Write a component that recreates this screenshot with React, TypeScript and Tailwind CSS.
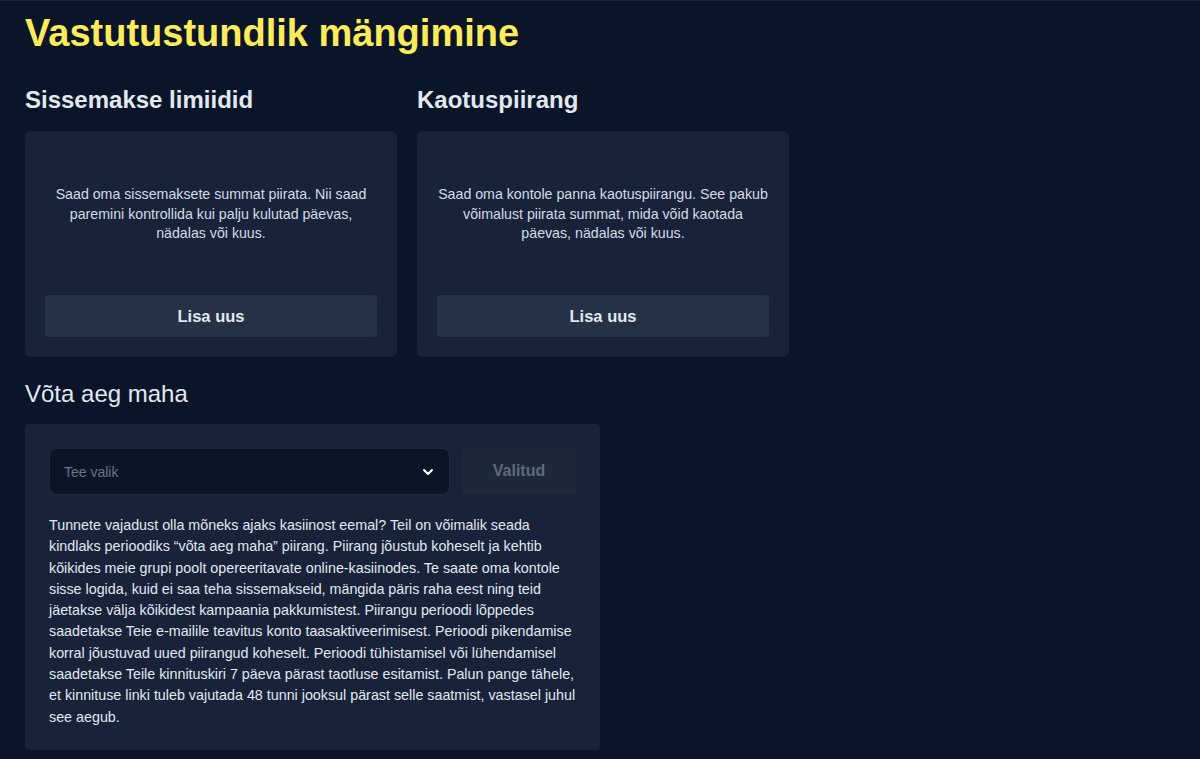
import { ChevronDown } from "lucide-react";

const limits = [
  {
    title: "Sissemakse limiidid",
    text: "Saad oma sissemaksete summat piirata. Nii saad paremini kontrollida kui palju kulutad päevas, nädalas või kuus.",
  },
  {
    title: "Kaotuspiirang",
    text: "Saad oma kontole panna kaotuspiirangu. See pakub võimalust piirata summat, mida võid kaotada päevas, nädalas või kuus.",
  },
];

const timeoutLines = [
  "Tunnete vajadust olla mõneks ajaks kasiinost eemal? Teil on võimalik seada",
  "kindlaks perioodiks “võta aeg maha” piirang. Piirang jõustub koheselt ja kehtib",
  "kõikides meie grupi poolt opereeritavate online-kasiinodes. Te saate oma kontole",
  "sisse logida, kuid ei saa teha sissemakseid, mängida päris raha eest ning teid",
  "jäetakse välja kõikidest kampaania pakkumistest. Piirangu perioodi lõppedes",
  "saadetakse Teie e-mailile teavitus konto taasaktiveerimisest. Perioodi pikendamise",
  "korral jõustuvad uued piirangud koheselt. Perioodi tühistamisel või lühendamisel",
  "saadetakse Teile kinnituskiri 7 päeva pärast taotluse esitamist. Palun pange tähele,",
  "et kinnituse linki tuleb vajutada 48 tunni jooksul pärast selle saatmist, vastasel juhul",
  "see aegub.",
];

const App = () => {
  return (
    <div className="min-h-[759px] border-t border-[#1c2638] bg-[#0a1529] px-[25px] pt-[12px] font-['Liberation_Sans',Arial,sans-serif]">
      <h1 className="text-[38px] font-bold leading-[40px] text-[#fdeb5c]">
        Vastutustundlik mängimine
      </h1>
      <div className="mt-[31px] flex gap-5">
        {limits.map((item) => (
          <div key={item.title} className="w-[372px]">
            <h2 className="text-2xl font-bold leading-8 text-[#e2e8f0]">
              {item.title}
            </h2>
            <div className="mt-[15px] flex flex-col rounded-md bg-[#18233a] p-5">
              <div className="flex h-[124px] items-center justify-center pt-[3px] text-center text-[14.2px] leading-[19.5px] text-[#d5dbe4]">
                {item.text}
              </div>
              <button className="mt-5 h-[42px] rounded bg-[#253245] text-[16.5px] font-bold text-[#e2e8f0]">
                Lisa uus
              </button>
            </div>
          </div>
        ))}
      </div>
      <h2 className="mt-[21px] text-2xl leading-8 text-[#e2e8f0]">Võta aeg maha</h2>
      <div className="mt-[14px] w-[575px] rounded bg-[#18233a] px-6 pt-6 pb-[22px]">
        <div className="flex gap-3">
          <div className="flex h-[47px] flex-1 items-center justify-between rounded-lg border border-[#1f2a3d] bg-[#0b1528] pr-[13px] pl-[14px]">
            <span className="text-sm text-[#6b7686]">Tee valik</span>
            <ChevronDown size={16} strokeWidth={3} className="text-white" />
          </div>
          <button className="h-[46px] w-[114px] rounded bg-[#1d283b] text-base font-bold text-[#5f6b7c]">
            Valitud
          </button>
        </div>
        <p className="mt-5 text-[14.3px] leading-[21.3px] whitespace-nowrap text-[#e2e8f0]">
          {timeoutLines.map((line, i) => (
            <span key={i} className="block">
              {line}
            </span>
          ))}
        </p>
      </div>
    </div>
  );
};

export default App;
